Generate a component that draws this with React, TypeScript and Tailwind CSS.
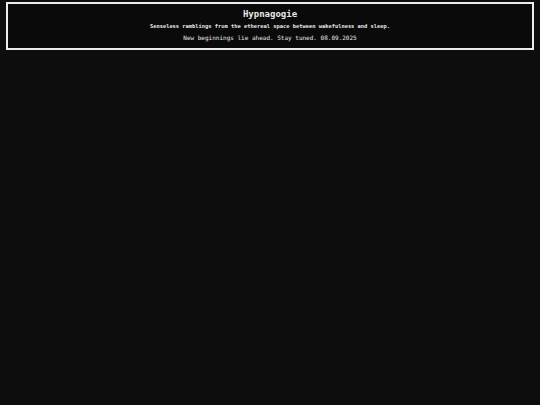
export default function App() {
  return (
    <div className="min-h-[405px] bg-[#0d0d0d] px-[6px] pt-[2px] font-['DejaVu_Sans_Mono',monospace] text-[#e8e8e8]">
      <header className="flex h-[48px] flex-col items-center border-2 border-[#ececec] bg-[#0a0a0a] pt-[5px] text-center">
        <h1 className="text-[9px] font-bold leading-[11px]">Hypnagogie</h1>
        <p className="mt-[3px] text-[5.4px] font-bold leading-[7px]">
          Senseless ramblings from the ethereal space between wakefulness and sleep.
        </p>
        <p className="mt-[4px] text-[6px] leading-[8px]">New beginnings lie ahead. Stay tuned. 08.09.2025</p>
      </header>
    </div>
  )
}
